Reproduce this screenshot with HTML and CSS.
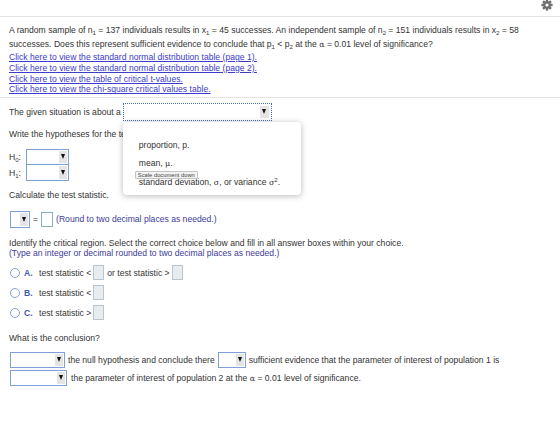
FILE: index.html
```html
<!DOCTYPE html>
<html lang="en">
<head>
    <meta charset="UTF-8">
    <meta name="viewport" content="width=device-width, initial-scale=1.0">
    <title>Two Proportions Hypothesis Test</title>
    <link rel="stylesheet" href="styles.css">
</head>
<body>
    <div class="topbar">
        <svg class="gear" viewBox="0 0 12 12" aria-hidden="true">
            <g fill="#6f6f6f" transform="translate(6 6)">
                <circle r="3.7"/>
                <rect x="-1.2" y="-5.6" width="2.4" height="11.2"/>
                <rect x="-1.2" y="-5.6" width="2.4" height="11.2" transform="rotate(45)"/>
                <rect x="-1.2" y="-5.6" width="2.4" height="11.2" transform="rotate(90)"/>
                <rect x="-1.2" y="-5.6" width="2.4" height="11.2" transform="rotate(135)"/>
            </g>
            <circle cx="6" cy="6" r="1.6" fill="#fff"/>
        </svg>
    </div>

    <div class="question">
        <p class="prompt">A random sample of n<sub>1</sub> = 137 individuals results in x<sub>1</sub> = 45 successes. An independent sample of n<sub>2</sub> = 151 individuals results in x<sub>2</sub> = 58<br>successes. Does this represent sufficient evidence to conclude that p<sub>1</sub> &lt; p<sub>2</sub> at the <span class="greek">α</span> = 0.01 level of significance?</p>
        <div class="links">
            <a href="#">Click here to view the standard normal distribution table (page 1).</a>
            <a href="#">Click here to view the standard normal distribution table (page 2).</a>
            <a href="#">Click here to view the table of critical t-values.</a>
            <a href="#">Click here to view the chi-square critical values table.</a>
        </div>
    </div>

    <div class="answers">
        <div class="row situation">
            <span>The given situation is about a</span>
            <div class="picker focused">
                <span class="arrow"></span>
                <div class="menu">
                    <div class="option">proportion, p.</div>
                    <div class="option">mean, <span class="greek">μ</span>.</div>
                    <div class="option">standard deviation, <span class="greek">σ</span>, or variance <span class="greek">σ</span><sup>2</sup>.</div>
                    <span class="tip">Scale document down</span>
                </div>
            </div>
        </div>

        <p class="line write">Write the hypotheses for the test.</p>

        <div class="hyp">
            <div class="row hyp-row">
                <span class="hyp-label">H<sub>0</sub>:</span>
                <div class="picker hyp-pick"><span class="arrow"></span></div>
            </div>
            <div class="row hyp-row">
                <span class="hyp-label">H<sub>1</sub>:</span>
                <div class="picker hyp-pick"><span class="arrow"></span></div>
            </div>
        </div>

        <p class="line calc">Calculate the test statistic.</p>

        <div class="row stat">
            <div class="picker stat-pick"><span class="arrow"></span></div>
            <span class="eq">=</span>
            <span class="box white"></span>
            <span class="note">(Round to two decimal places as needed.)</span>
        </div>

        <div class="identify">
            <p class="line">Identify the critical region. Select the correct choice below and fill in all answer boxes within your choice.</p>
            <p class="line note">(Type an integer or decimal rounded to two decimal places as needed.)</p>
        </div>

        <div class="choices">
            <div class="row choice">
                <span class="radio"></span>
                <span class="letter">A.</span>
                <span>test statistic &lt;</span>
                <span class="box"></span>
                <span class="gap">or test statistic &gt;</span>
                <span class="box"></span>
            </div>
            <div class="row choice">
                <span class="radio"></span>
                <span class="letter">B.</span>
                <span>test statistic &lt;</span>
                <span class="box"></span>
            </div>
            <div class="row choice">
                <span class="radio"></span>
                <span class="letter">C.</span>
                <span>test statistic &gt;</span>
                <span class="box"></span>
            </div>
        </div>

        <p class="line conclusion">What is the conclusion?</p>

        <div class="row concl-row first">
            <div class="picker decision"><span class="arrow"></span></div>
            <span class="after">the null hypothesis and conclude there</span>
            <div class="picker is-not"><span class="arrow"></span></div>
            <span class="after">sufficient evidence that the parameter of interest of population 1 is</span>
        </div>
        <div class="row concl-row">
            <div class="picker relation"><span class="arrow"></span></div>
            <span class="after wide">the parameter of interest of population 2 at the <span class="greek">α</span> = 0.01 level of significance.</span>
        </div>
    </div>
</body>
</html>
```

FILE: styles.css
```css
:root {
    --text: #333;
    --link: #3b3bcc;
    --note: #3c3c98;
    --rule: #e4e4e4;
    --pick-border: #7f9fdc;
}
body {
    margin: 0;
    background: #fff;
    color: var(--text);
    font-family: 'Liberation Sans', Arial, sans-serif;
    font-size: 8.6px;
}
p {
    margin: 0;
}
sub {
    font-size: 70%;
    line-height: 0;
    vertical-align: -2px;
}
sup {
    font-size: 70%;
    line-height: 0;
    vertical-align: 3px;
}
.greek {
    font-family: 'DejaVu Serif', serif;
    font-size: 92%;
}

/* header strip with settings gear */
.topbar {
    height: 16px;
    border-bottom: 1px solid var(--rule);
    display: flex;
    justify-content: flex-end;
    align-items: flex-start;
    padding-right: 7px;
}
.gear {
    width: 12px;
    height: 12px;
    margin-top: -1px;
}

/* problem statement */
.question {
    padding: 6px 9px 2px 9px;
    border-bottom: 1px solid var(--rule);
}
.prompt {
    line-height: 14px;
}
.links a {
    display: block;
    line-height: 10.8px;
    color: var(--link);
    text-decoration: underline;
}

/* answer area */
.answers {
    padding: 0 9px;
}
.row {
    display: flex;
    align-items: center;
}
.line {
    line-height: 10px;
}
.note {
    color: var(--note);
}

.picker {
    position: relative;
    box-sizing: border-box;
    border: 1px solid var(--pick-border);
    background: #fff;
    display: flex;
    justify-content: flex-end;
    align-items: stretch;
    padding: 1px 1px 1px 0;
}
.arrow {
    width: 8px;
    background: #e4e4e4;
    display: flex;
    align-items: center;
    justify-content: center;
}
.arrow::after {
    content: "";
    border-left: 2.5px solid transparent;
    border-right: 2.5px solid transparent;
    border-top: 5px solid #111;
}

.situation {
    margin-top: 4.5px;
    height: 18px;
}
.situation .picker {
    margin-left: 2px;
    width: 149px;
    height: 18px;
    padding: 2px;
}
.picker.focused {
    border: 1px dotted #4a64b4;
}
.situation .arrow {
    width: 9px;
}

/* open dropdown list */
.menu {
    position: absolute;
    top: calc(100% + 2px);
    left: -1px;
    width: 178px;
    height: 73px;
    box-sizing: border-box;
    padding: 14px 0 0 16px;
    background: #fff;
    border-radius: 4px;
    box-shadow: 0 1px 6px rgba(0, 0, 0, 0.28);
    z-index: 2;
}
.option {
    line-height: 18px;
    font-size: 8.6px;
    white-space: nowrap;
}
.tip {
    position: absolute;
    left: 12px;
    top: 49px;
    font-size: 5.8px;
    line-height: 6px;
    padding: 0 2px;
    background: #f3f3f3;
    border: 1px solid #c4c4c4;
    border-radius: 1px;
    color: #444;
    white-space: nowrap;
}

.write {
    margin-top: 8px;
}

.hyp {
    margin-top: 10px;
}
.hyp-row {
    height: 16px;
}
.hyp-label {
    width: 17px;
}
.hyp-pick {
    width: 43px;
    height: 16px;
}
.hyp-row + .hyp-row .hyp-pick {
    border-top: none;
}

.calc {
    margin-top: 9px;
}

.stat {
    margin-top: 11px;
    height: 17px;
}
.stat-pick {
    margin-left: 1px;
    width: 20px;
    height: 17px;
}
.eq {
    margin: 0 3px;
}
.box {
    display: inline-block;
    width: 11px;
    height: 15px;
    box-sizing: border-box;
    background: #e8ecef;
    border: 1px solid #b9c6cf;
    margin-left: 2px;
}
.box.white {
    width: 12px;
    background: #fff;
    border-color: #8ab0c8;
    margin: 0 3px 0 0;
}

.identify {
    margin-top: 10px;
}

.choices {
    margin-top: 7.5px;
    display: flex;
    flex-direction: column;
    gap: 5px;
}
.choice {
    height: 15px;
}
.radio {
    width: 10px;
    height: 10px;
    box-sizing: border-box;
    border: 1px solid #88a4cc;
    border-radius: 50%;
    margin: 0 4px 0 1px;
}
.letter {
    width: 15px;
    color: #3d5aae;
    font-weight: bold;
}
.gap {
    margin-left: 3px;
}

.conclusion {
    margin-top: 12.5px;
}
.concl-row {
    height: 16px;
    margin-top: 2px;
}
.concl-row.first {
    margin-top: 9px;
}
.decision {
    margin-left: 1px;
    width: 55px;
    height: 16px;
}
.is-not {
    width: 28px;
    height: 16px;
}
.relation {
    margin-left: 1px;
    width: 57px;
    height: 16px;
}
.after {
    margin: 0 3px;
}
.after.wide {
    margin-left: 4px;
}
```
